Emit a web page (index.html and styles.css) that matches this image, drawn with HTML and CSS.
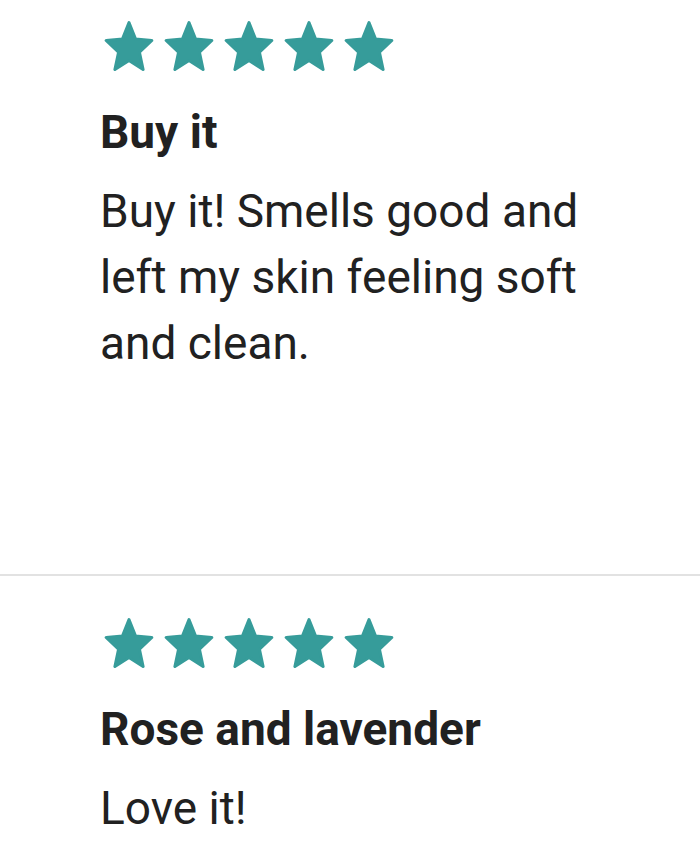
FILE: index.html
```html
<!DOCTYPE html>
<html lang="en">
<head>
    <meta charset="UTF-8">
    <meta name="viewport" content="width=device-width, initial-scale=1.0">
    <title>Reviews</title>
    <link rel="stylesheet" href="styles.css">
</head>
<body>
    <div class="reviews">
        <div class="review">
            <div class="stars">
                <svg class="star" viewBox="0 0 60 50"><polygon points="30,1.6 36.47,17.9 52.83,19.5 40.46,31.2 44.11,48.5 30,39.4 15.89,48.5 19.54,31.2 7.17,19.5 23.53,17.9"/></svg>
                <svg class="star" viewBox="0 0 60 50"><polygon points="30,1.6 36.47,17.9 52.83,19.5 40.46,31.2 44.11,48.5 30,39.4 15.89,48.5 19.54,31.2 7.17,19.5 23.53,17.9"/></svg>
                <svg class="star" viewBox="0 0 60 50"><polygon points="30,1.6 36.47,17.9 52.83,19.5 40.46,31.2 44.11,48.5 30,39.4 15.89,48.5 19.54,31.2 7.17,19.5 23.53,17.9"/></svg>
                <svg class="star" viewBox="0 0 60 50"><polygon points="30,1.6 36.47,17.9 52.83,19.5 40.46,31.2 44.11,48.5 30,39.4 15.89,48.5 19.54,31.2 7.17,19.5 23.53,17.9"/></svg>
                <svg class="star" viewBox="0 0 60 50"><polygon points="30,1.6 36.47,17.9 52.83,19.5 40.46,31.2 44.11,48.5 30,39.4 15.89,48.5 19.54,31.2 7.17,19.5 23.53,17.9"/></svg>
            </div>
            <h2 class="review-title">Buy it</h2>
            <p class="review-text">Buy it! Smells good and left my skin feeling soft and clean.</p>
        </div>

        <div class="review">
            <div class="stars">
                <svg class="star" viewBox="0 0 60 50"><polygon points="30,1.6 36.47,17.9 52.83,19.5 40.46,31.2 44.11,48.5 30,39.4 15.89,48.5 19.54,31.2 7.17,19.5 23.53,17.9"/></svg>
                <svg class="star" viewBox="0 0 60 50"><polygon points="30,1.6 36.47,17.9 52.83,19.5 40.46,31.2 44.11,48.5 30,39.4 15.89,48.5 19.54,31.2 7.17,19.5 23.53,17.9"/></svg>
                <svg class="star" viewBox="0 0 60 50"><polygon points="30,1.6 36.47,17.9 52.83,19.5 40.46,31.2 44.11,48.5 30,39.4 15.89,48.5 19.54,31.2 7.17,19.5 23.53,17.9"/></svg>
                <svg class="star" viewBox="0 0 60 50"><polygon points="30,1.6 36.47,17.9 52.83,19.5 40.46,31.2 44.11,48.5 30,39.4 15.89,48.5 19.54,31.2 7.17,19.5 23.53,17.9"/></svg>
                <svg class="star" viewBox="0 0 60 50"><polygon points="30,1.6 36.47,17.9 52.83,19.5 40.46,31.2 44.11,48.5 30,39.4 15.89,48.5 19.54,31.2 7.17,19.5 23.53,17.9"/></svg>
            </div>
            <h2 class="review-title">Rose and lavender</h2>
            <p class="review-text">Love it!</p>
        </div>
    </div>
</body>
</html>
```

FILE: styles.css
```css
body {
    margin: 0;
    font-family: Roboto, "Liberation Sans", sans-serif;
    background-color: #ffffff;
    color: #212121;
}
.review {
    padding: 42px 100px 40px 100px;
    border-bottom: 2px solid #e2e2e2;
}
.review:first-child {
    padding-top: 21px;
    padding-bottom: 198px;
}
.stars {
    display: flex;
    margin-left: -1px;
}
.star {
    width: 60px;
    height: 50px;
    fill: #369c9a;
    stroke: #369c9a;
    stroke-width: 3;
    stroke-linejoin: round;
}
.review-title {
    margin: 35px 0 0 0;
    font-size: 46px;
    line-height: 52px;
    font-weight: 700;
}
.review-text {
    margin: 20px 0 0 0;
    font-size: 46px;
    line-height: 66px;
    font-weight: 400;
    max-width: 500px;
}
```
